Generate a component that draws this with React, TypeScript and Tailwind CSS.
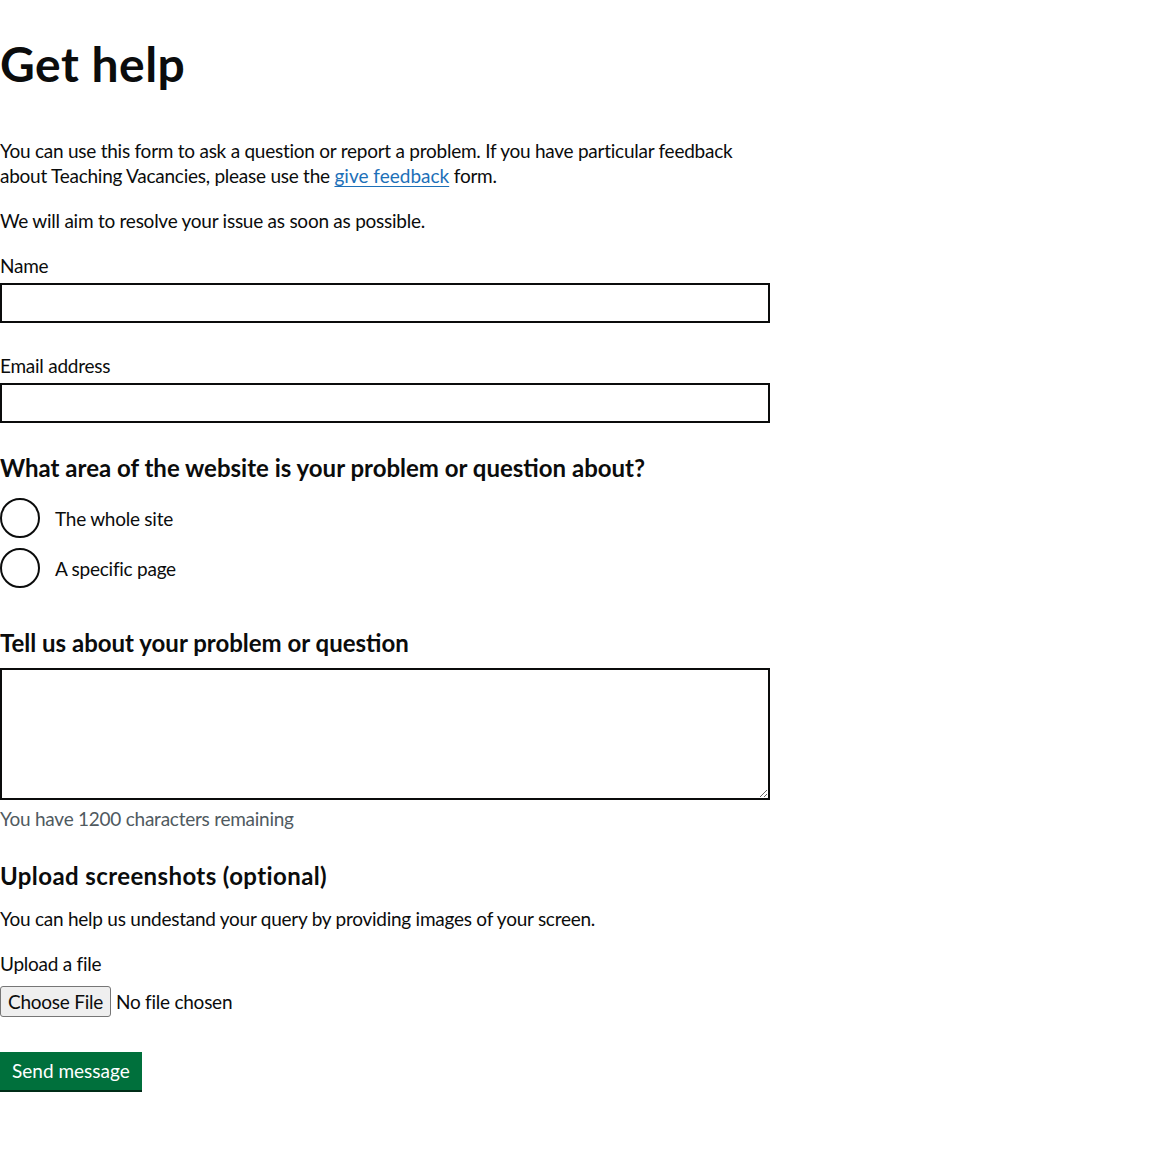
import React, { useState } from 'react';

const font = { fontFamily: 'Lato, "Liberation Sans", sans-serif' };

const App: React.FC = () => {
  const [area, setArea] = useState('');
  const [message, setMessage] = useState('');

  return (
    <div className="bg-white min-h-[1162px] text-[#0b0c0c] tracking-[-0.25px]" style={font}>
      <main className="w-[770px]">
        <h1 className="pt-[39px] mb-[49px] text-[48px] leading-[50px] font-bold tracking-[0.5px]">Get help</h1>

        <p className="text-[19px] leading-[25px] mb-[20px]">
          You can use this form to ask a question or report a problem. If you have particular feedback about Teaching
          Vacancies, please use the{' '}
          <a href="#" className="text-[#1d70b8] underline underline-offset-[3px] decoration-1 tracking-normal">give feedback</a> form.
        </p>
        <p className="text-[19px] leading-[25px] mb-[20px]">We will aim to resolve your issue as soon as possible.</p>

        <div className="mb-[30px]">
          <label className="block text-[19px] leading-[25px] mb-[5px]">Name</label>
          <input type="text" className="block w-full h-[40px] border-2 border-[#0b0c0c] px-[5px] text-[19px]" />
        </div>

        <div className="mb-[30px]">
          <label className="block text-[19px] leading-[25px] mb-[5px]">Email address</label>
          <input type="email" className="block w-full h-[40px] border-2 border-[#0b0c0c] px-[5px] text-[19px]" />
        </div>

        <fieldset className="mb-[40px]">
          <legend className="text-[24px] leading-[30px] font-bold tracking-normal mb-[15px]">
            What area of the website is your problem or question about?
          </legend>
          <div className="flex flex-col gap-[10px]">
            {['The whole site', 'A specific page'].map((opt) => (
              <label key={opt} className="flex items-center h-[40px] cursor-pointer">
                <span className="relative w-[40px] h-[40px] rounded-full border-2 border-[#0b0c0c] shrink-0">
                  {area === opt && <span className="absolute inset-[8px] rounded-full bg-[#0b0c0c]" />}
                </span>
                <input type="radio" name="area" className="sr-only" checked={area === opt} onChange={() => setArea(opt)} />
                <span className="pl-[15px] text-[19px] leading-[25px]">{opt}</span>
              </label>
            ))}
          </div>
        </fieldset>

        <div className="mb-[30px]">
          <label className="block text-[24px] leading-[30px] font-bold tracking-normal mb-[10px]">
            Tell us about your problem or question
          </label>
          <textarea
            value={message}
            onChange={(e) => setMessage(e.target.value.slice(0, 1200))}
            className="block w-full h-[132px] border-2 border-[#0b0c0c] p-[5px] text-[19px] resize-y"
          />
          <div className="mt-[6px] text-[19px] leading-[25px] text-[#505a5f]">
            You have {1200 - message.length} characters remaining
          </div>
        </div>

        <h2 className="text-[24px] leading-[30px] font-bold tracking-[0.4px] mb-[15px]">Upload screenshots (optional)</h2>
        <p className="text-[19px] leading-[25px] mb-[20px]">
          You can help us undestand your query by providing images of your screen.
        </p>

        <div className="mb-[35px]">
          <label className="block text-[19px] leading-[25px] mb-[10px]">Upload a file</label>
          <input
            type="file"
            className="block text-[19px] leading-[25px] file:mr-[5px] file:border file:border-[#767676] file:bg-[#efefef] file:rounded-[3px] file:px-[7px] file:py-[2px] file:text-[#0b0c0c]"
          />
        </div>

        <button className="bg-[#00703c] text-white text-[19px] leading-[19px] tracking-normal px-[12px] pt-[9px] pb-[10px] shadow-[0_2px_0_#002d18]">
          Send message
        </button>
      </main>
    </div>
  );
};

export default App;
